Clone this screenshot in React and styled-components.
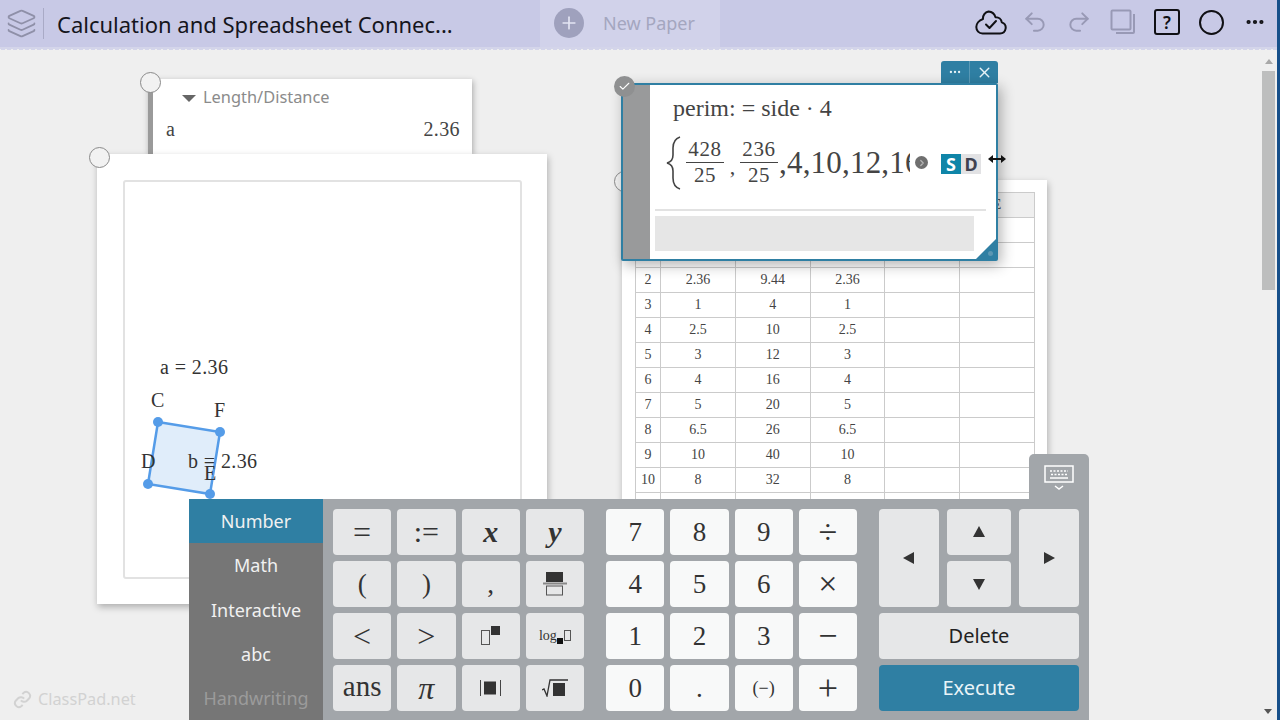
import styled, { createGlobalStyle } from 'styled-components';
import { Layers, Undo2, Redo2, Ellipsis, Plus, X, Check, ChevronRight } from 'lucide-react';

const TEAL = '#2f7fa3';
const MATH_FONT = '"Liberation Serif", "DejaVu Serif", serif';
const UI_FONT = '"Noto Sans", "Open Sans", sans-serif';

const GlobalStyle = createGlobalStyle`
  html, body { margin: 0; padding: 0; background: #efefef; }
  * { box-sizing: border-box; }
`;

const Page = styled.div`
  position: relative;
  display: flex;
  flex-direction: column;
  width: 1280px;
  height: 720px;
  overflow: hidden;
  background: #efefef;
  font-family: ${UI_FONT};
`;

const EdgeStrip = styled.div`
  position: absolute;
  top: 0;
  right: 0;
  bottom: 0;
  z-index: 10;
  width: 3px;
  background: #17508a;
`;

// Top bar with its scalloped lower edge
const TopBar = styled.header`
  position: relative;
  z-index: 5;
  display: flex;
  align-items: center;
  flex: none;
  height: 47px;
  background: #c8c9e6;
  &::after {
    content: '';
    position: absolute;
    left: 0;
    right: 0;
    top: 47px;
    height: 3px;
    background: radial-gradient(circle at 3px 0, #d4d5ea 3px, transparent 3.5px) 0 0 / 6px 3px repeat-x;
  }
`;

const TitleArea = styled.div`
  display: flex;
  align-items: center;
  width: 540px;
  height: 100%;
  padding-left: 6px;
`;

const LayersButton = styled.div`
  display: flex;
  padding-right: 6px;
  margin-right: 13px;
  border-right: 1px solid #a9aac6;
  color: #8f90a8;
`;

const Title = styled.h1`
  margin: 0;
  font-size: 22px;
  font-weight: 400;
  color: #15151c;
  white-space: nowrap;
`;

const NewPaperTab = styled.div`
  display: flex;
  align-items: center;
  gap: 19px;
  width: 180px;
  height: 47px;
  padding: 0 0 2px 14px;
  background: #d1d2ea;
  font-size: 18px;
  color: #a4a6bf;
`;

const PlusCircle = styled.span`
  display: flex;
  align-items: center;
  justify-content: center;
  width: 30px;
  height: 30px;
  border-radius: 50%;
  background: #9fa1bd;
  color: #e4e5f3;
`;

const Toolbar = styled.div`
  display: flex;
  margin: 0 0 3px auto;
  padding-right: 3px;
`;

const ToolSlot = styled.span`
  display: flex;
  align-items: center;
  justify-content: center;
  width: 44px;
  height: 44px;
  color: ${(p) => (p.$muted ? '#9899b5' : '#101014')};
`;

const HelpBox = styled.span`
  display: flex;
  align-items: center;
  justify-content: center;
  width: 26px;
  height: 26px;
  border: 2px solid #101014;
  border-radius: 3px;
  font-size: 17px;
  font-weight: 600;
`;

const ModeRing = styled.span`
  width: 25px;
  height: 25px;
  border: 2px solid #101014;
  border-radius: 50%;
`;

// Free canvas: papers and cards sit where the user dragged them
const Canvas = styled.main`
  position: relative;
  flex: 1;
`;

const Card = styled.section`
  position: absolute;
  left: ${(p) => p.$x}px;
  top: ${(p) => p.$y - 47}px;
  width: ${(p) => p.$w}px;
  height: ${(p) => p.$h}px;
  background: #fff;
  box-shadow: 1px 3px 7px rgba(0, 0, 0, 0.28);
`;

const Handle = styled.span`
  position: absolute;
  left: ${(p) => p.$x}px;
  top: ${(p) => p.$y}px;
  width: 21px;
  height: 21px;
  border: 1px solid #8a8a8a;
  border-radius: 50%;
  background: #f2f2f2;
`;

const UnitCard = styled(Card)`
  padding: 6px 12px 0 13px;
  border-left: 5px solid #9a9a9a;
  box-shadow: 1px 2px 6px rgba(0, 0, 0, 0.3);
`;

const UnitHeader = styled.div`
  display: flex;
  align-items: center;
  gap: 7px;
  height: 22px;
  padding-left: 16px;
  font-size: 16.4px;
  color: #8b8b8b;
`;

const Caret = styled.span`
  width: 0;
  height: 0;
  margin-top: 4px;
  border: 7px solid transparent;
  border-bottom: 0;
  border-top-color: #666;
`;

const UnitRow = styled.div`
  display: flex;
  justify-content: space-between;
  margin-top: 11px;
  font-family: ${MATH_FONT};
  font-size: 20px;
  letter-spacing: 0.4px;
  color: #444;
`;

const GeometryFrame = styled.div`
  width: 399px;
  height: 399px;
  margin: 26px 0 0 26px;
  border: 2px solid #e2e2e2;
  border-radius: 3px;
`;

const SheetTable = styled.table`
  margin: 12px 0 0 13px;
  width: 400px;
  border-collapse: collapse;
  table-layout: fixed;
  font-family: ${MATH_FONT};
  font-size: 14px;
  color: #444;
  td {
    height: 25px;
    padding: 0;
    border: 1px solid #cbcbcb;
    text-align: center;
  }
  td:first-child {
    width: 25px;
  }
`;

const HeaderRow = styled.tr`
  background: #efefef;
`;

// Calculation card with the focus border
const CalcCard = styled(Card)`
  display: flex;
  border: 2px solid ${TEAL};
  border-radius: 2px;
  box-shadow: 3px 4px 14px rgba(0, 0, 0, 0.3);
  z-index: 2;
`;

const CalcGutter = styled.div`
  flex: none;
  width: 27px;
  background: #999a9b;
`;

const CalcBody = styled.div`
  flex: 1;
  display: flex;
  flex-direction: column;
  padding: 6px 0 0 5px;
  font-family: ${MATH_FONT};
  color: #444;
`;

const Formula = styled.div`
  height: 34px;
  padding-left: 18px;
  font-size: 24px;
  line-height: 34px;
`;

const ResultRow = styled.div`
  position: relative;
  display: flex;
  align-items: center;
  height: 70px;
  margin-top: 3px;
  padding-left: 11px;
`;

const ResultClip = styled.div`
  display: flex;
  align-items: center;
  width: 224px;
  margin-left: 4px;
  padding: 4px 0;
  overflow: hidden;
  font-size: 31px;
  letter-spacing: 0.2px;
  white-space: nowrap;
`;

const Fraction = styled.span`
  display: inline-flex;
  flex-direction: column;
  align-items: center;
  flex: none;
  width: 38px;
  margin: -2px 1px 0 0;
  font-size: 21px;
  letter-spacing: 0.6px;
  line-height: 25px;
  span + span {
    border-top: 1px solid #444;
    align-self: stretch;
    text-align: center;
  }
`;

const Comma = styled.span`
  flex: none;
  width: 15px;
  margin-top: 8px;
  font-size: 22px;
  text-align: center;
`;

const MoreDot = styled.span`
  position: absolute;
  left: 260px;
  top: 28px;
  display: flex;
  align-items: center;
  justify-content: center;
  width: 13px;
  height: 13px;
  border-radius: 50%;
  background: #6f6f6f;
  color: #b5b5b5;
`;

const SDToggle = styled.div`
  position: absolute;
  left: 286px;
  top: 26px;
  display: flex;
  font-family: ${UI_FONT};
  font-size: 18px;
  font-weight: 700;
  line-height: 20px;
`;

const SDPart = styled.span`
  width: 20px;
  text-align: center;
  background: ${(p) => (p.$active ? '#0f85a8' : '#e2e2e4')};
  color: ${(p) => (p.$active ? '#fff' : '#3f4150')};
`;

const Divider = styled.div`
  height: 2px;
  margin: 11px 0 5px 0;
  width: 331px;
  background: #e2e2e2;
`;

const InputLine = styled.div`
  width: 319px;
  height: 35px;
  background: #e6e6e6;
`;

const ResizeCorner = styled.span`
  position: absolute;
  right: 0;
  bottom: 0;
  width: 20px;
  height: 20px;
  background: ${TEAL};
  clip-path: polygon(100% 0, 100% 100%, 0 100%);
  &::after {
    content: '';
    position: absolute;
    right: 3px;
    bottom: 3px;
    width: 5px;
    height: 5px;
    border-radius: 50%;
    background: #5c97b3;
  }
`;

const CardTab = styled.div`
  position: absolute;
  left: 941px;
  top: ${61 - 47}px;
  z-index: 2;
  display: flex;
  width: 57px;
  height: 22px;
  border-radius: 3px 3px 0 0;
  background: ${TEAL};
  color: #e8f3f7;
`;

const CardTabButton = styled.span`
  display: flex;
  align-items: center;
  justify-content: center;
  flex: 1;
  & + & {
    border-left: 1px solid #5b9ab7;
  }
`;

const CheckBadge = styled.span`
  position: absolute;
  left: 614px;
  top: ${76 - 47}px;
  z-index: 3;
  display: flex;
  align-items: center;
  justify-content: center;
  width: 21px;
  height: 21px;
  border-radius: 50%;
  background: #8f9091;
  color: #fff;
`;

const ResizeCursor = styled.svg`
  position: absolute;
  left: 987px;
  top: ${153 - 47}px;
  z-index: 4;
`;

const Watermark = styled.div`
  position: absolute;
  left: 13px;
  bottom: 10px;
  display: flex;
  align-items: center;
  gap: 6px;
  font-size: 16.3px;
  color: #d2d2d2;
`;

const ScrollTrack = styled.div`
  position: absolute;
  right: 5px;
  top: 12px;
  display: flex;
  flex-direction: column;
  align-items: center;
  gap: 7px;
  width: 13px;
`;

const ScrollUp = styled.span`
  width: 0;
  height: 0;
  border: 4px solid transparent;
  border-top: 0;
  border-bottom: 5px solid #a8a8a8;
`;

const ScrollThumb = styled.span`
  width: 13px;
  height: 219px;
  background: #bdbebe;
`;

const ScrollDown = styled.span`
  position: absolute;
  right: 8px;
  bottom: 6px;
  width: 0;
  height: 0;
  border: 4px solid transparent;
  border-bottom: 0;
  border-top: 5px solid #555;
`;

// Virtual keyboard overlay
const KeyboardToggle = styled.div`
  position: absolute;
  left: 1029px;
  bottom: 221px;
  z-index: 6;
  display: flex;
  justify-content: center;
  width: 60px;
  height: 45px;
  padding-top: 11px;
  border-radius: 5px 5px 0 0;
  background: #a2a6aa;
  color: #fff;
`;

const Keyboard = styled.div`
  position: absolute;
  left: 189px;
  bottom: 0;
  z-index: 6;
  display: flex;
  width: 900px;
  height: 221px;
  background: #a2a6aa;
`;

const KeyTabs = styled.nav`
  display: flex;
  flex-direction: column;
  flex: none;
  width: 134px;
  background: #767676;
`;

const KeyTab = styled.div`
  display: flex;
  align-items: center;
  justify-content: center;
  height: 44.5px;
  font-size: 18px;
  color: ${(p) => (p.$disabled ? '#9b9b9b' : '#f1f1f1')};
  background: ${(p) => (p.$active ? TEAL : 'transparent')};
`;

const KeyGroups = styled.div`
  display: flex;
  padding: 10px 0 0 10px;
`;

const KeyGrid = styled.div`
  display: grid;
  grid-template-columns: repeat(4, 1fr);
  grid-auto-rows: 46px;
  gap: 6px;
  width: 251px;
  margin-right: ${(p) => p.$gap}px;
`;

const Key = styled.button`
  display: flex;
  align-items: center;
  justify-content: center;
  padding: 0 0 ${(p) => p.$lift || 0}px;
  border: 0;
  border-radius: 4px;
  background: ${(p) => (p.$light ? '#f8f9f9' : '#e6e7e8')};
  color: #333;
  font-family: ${MATH_FONT};
  font-size: ${(p) => p.$size || 27}px;
  font-style: ${(p) => (p.$italic ? 'italic' : 'normal')};
  font-weight: ${(p) => (p.$bold ? 700 : 400)};
`;

const NavGrid = styled.div`
  display: grid;
  grid-template-columns: 60px 64px 60px;
  grid-auto-rows: 46px;
  column-gap: 8px;
  row-gap: 6px;
  width: 200px;
`;

const TallKey = styled(Key)`
  grid-row: span 2;
`;

const WideKey = styled(Key)`
  grid-column: 1 / -1;
  padding-bottom: 2px;
  font-family: ${UI_FONT};
  font-size: 20px;
  background: ${(p) => (p.$primary ? TEAL : '#e6e7e8')};
  color: ${(p) => (p.$primary ? '#e9f4f8' : '#222')};
`;

const NavColumn = styled.div`
  display: flex;
  flex-direction: column;
  gap: 6px;
  grid-row: span 2;
  ${Key} {
    height: 46px;
  }
`;

const LogKey = styled.span`
  display: flex;
  align-items: flex-end;
  font-size: 14px;
`;

function CloudIcon() {
  return (
    <svg width="32" height="26" viewBox="0 0 32 26" fill="none" stroke="currentColor" strokeWidth="2" strokeLinejoin="round" strokeLinecap="round">
      <path d="M7.500 24.500h17.500a5.700 5.700 0 0 0 1.800-11.100 6 6 0 0 0-6.300-5.200A8 8 0 0 0 13.500 2.500a7 7 0 0 0-5.500 7.500C3.800 11.500 1.300 15 1.300 18c0 3.800 2.700 6.500 6.200 6.500z" />
      <path d="M11 15.500l3.500 3.500 6.500-7" />
    </svg>
  );
}

function CopyIcon() {
  return (
    <svg width="26" height="26" viewBox="0 0 26 26" fill="none" stroke="currentColor" strokeWidth="2">
      <rect x="1.500" y="1.500" width="19" height="19" rx="1" />
      <path d="M24 5v18a1 1 0 0 1-1 1H6" />
    </svg>
  );
}

function KeyboardIcon() {
  return (
    <svg width="30" height="26" viewBox="0 0 30 26" fill="none" stroke="currentColor">
      <rect x="1" y="1" width="28" height="16" strokeWidth="1.500" />
      <path d="M6 6h18M7 9.500h16" strokeWidth="1.500" strokeDasharray="2 1.500" />
      <path d="M6 13h18" strokeWidth="1.500" />
      <path d="M11 21l4 3 4-3" strokeWidth="1.500" />
    </svg>
  );
}

function LinkIcon() {
  return (
    <svg width="19" height="19" viewBox="0 0 24 24" fill="none" stroke="currentColor" strokeWidth="2.500">
      <path d="M10 13a5 5 0 0 0 7.500.5l3-3a5 5 0 0 0-7-7l-1.700 1.700" />
      <path d="M14 11a5 5 0 0 0-7.500-.5l-3 3a5 5 0 0 0 7 7l1.700-1.700" />
    </svg>
  );
}

function Brace() {
  return (
    <svg width="16" height="54" viewBox="0 0 16 54" fill="none" stroke="#444" strokeWidth="1.600">
      <path d="M14 1C8 3 7 7 7 12v7c0 4-2 7-6 8 4 1 6 4 6 8v7c0 5 1 9 7 11" />
    </svg>
  );
}

// Little glyph drawings for the template keys
function FractionGlyph() {
  return (
    <svg width="24" height="24" viewBox="0 0 24 24">
      <rect x="3" y="0" width="17" height="10" fill="#333" />
      <rect x="0" y="10.500" width="24" height="2" fill="#888" />
      <rect x="3.500" y="14" width="16" height="9" fill="none" stroke="#555" />
    </svg>
  );
}

function PowerGlyph() {
  return (
    <svg width="20" height="20" viewBox="0 0 20 20">
      <rect x="0.500" y="4.500" width="8" height="14" fill="none" stroke="#555" />
      <rect x="10" y="0" width="9" height="9" fill="#333" />
    </svg>
  );
}

function AbsGlyph() {
  return (
    <svg width="21" height="16" viewBox="0 0 21 16">
      <rect x="0" y="0" width="1" height="16" fill="#444" />
      <rect x="4" y="1.500" width="12" height="13" fill="#333" />
      <rect x="20" y="0" width="1" height="16" fill="#444" />
    </svg>
  );
}

function RootGlyph() {
  return (
    <svg width="26" height="18" viewBox="0 0 26 18">
      <path d="M0 11l2-1 3 7L8 1h18" fill="none" stroke="#333" strokeWidth="1.300" />
      <rect x="11" y="4" width="12" height="13" fill="#333" />
    </svg>
  );
}

function LogGlyph() {
  return (
    <LogKey>
      log
      <svg width="14" height="16" viewBox="0 0 14 16">
        <rect x="0" y="10" width="6" height="6" fill="#111" />
        <rect x="7.500" y="2.500" width="6" height="10" fill="none" stroke="#555" />
      </svg>
    </LogKey>
  );
}

function Triangle({ dir }) {
  const points = {
    up: '1,12 7,1 13,12',
    down: '1,2 13,2 7,13',
    left: '12,1 12,13 1,7',
    right: '2,1 13,7 2,13',
  };
  return (
    <svg width="14" height="14" viewBox="0 0 14 14">
      <polygon points={points[dir]} fill="#333" />
    </svg>
  );
}

const sheetRows = [
  ['2', '2.36', '9.44', '2.36'],
  ['3', '1', '4', '1'],
  ['4', '2.5', '10', '2.5'],
  ['5', '3', '12', '3'],
  ['6', '4', '16', '4'],
  ['7', '5', '20', '5'],
  ['8', '6.5', '26', '6.5'],
  ['9', '10', '40', '10'],
  ['10', '8', '32', '8'],
  ['', '', '', ''],
];

const mathKeys = [
  { label: '=', size: 32 },
  { label: ':=', size: 30 },
  { label: 'x', italic: true, bold: true, size: 30 },
  { label: 'y', italic: true, bold: true, size: 30 },
  { label: '(' },
  { label: ')' },
  { label: ',' },
  { label: <FractionGlyph /> },
  { label: '<', size: 32 },
  { label: '>', size: 32 },
  { label: <PowerGlyph /> },
  { label: <LogGlyph /> },
  { label: 'ans', size: 29, lift: 4 },
  { label: 'π', italic: true, size: 32 },
  { label: <AbsGlyph /> },
  { label: <RootGlyph /> },
];

const numberKeys = [
  { label: '7' }, { label: '8' }, { label: '9' }, { label: '÷', size: 34 },
  { label: '4' }, { label: '5' }, { label: '6' }, { label: '×', size: 34 },
  { label: '1' }, { label: '2' }, { label: '3' }, { label: '−', size: 34 },
  { label: '0' }, { label: '.' }, { label: '(−)', size: 18 }, { label: '+', size: 36 },
];

const keyTabs = ['Number', 'Math', 'Interactive', 'abc', 'Handwriting'];

function App() {
  return (
    <Page>
      <GlobalStyle />
      <TopBar>
        <TitleArea>
          <LayersButton>
            <Layers size={31} strokeWidth={1.4} />
          </LayersButton>
          <Title>Calculation and Spreadsheet Connec...</Title>
        </TitleArea>
        <NewPaperTab>
          <PlusCircle>
            <Plus size={20} strokeWidth={2} />
          </PlusCircle>
          New Paper
        </NewPaperTab>
        <Toolbar>
          <ToolSlot><CloudIcon /></ToolSlot>
          <ToolSlot $muted><Undo2 size={26} strokeWidth={1.8} /></ToolSlot>
          <ToolSlot $muted><Redo2 size={26} strokeWidth={1.8} /></ToolSlot>
          <ToolSlot $muted><CopyIcon /></ToolSlot>
          <ToolSlot><HelpBox>?</HelpBox></ToolSlot>
          <ToolSlot><ModeRing /></ToolSlot>
          <ToolSlot><Ellipsis size={22} strokeWidth={2.6} /></ToolSlot>
        </Toolbar>
      </TopBar>

      <Canvas>
        <UnitCard $x={148} $y={79} $w={324} $h={75}>
          <UnitHeader>
            <Caret />
            Length/Distance
          </UnitHeader>
          <UnitRow>
            <span>a</span>
            <span>2.36</span>
          </UnitRow>
        </UnitCard>
        <Handle $x={140} $y={72 - 47} />

        <Card $x={97} $y={154} $w={450} $h={450}>
          <GeometryFrame>
            <svg width="395" height="395" viewBox="125 182 395 395">
              <polygon points="158,422 220,432 210,494 148,484" fill="#e0edfa" stroke="#559ce8" strokeWidth="2.500" />
              {[[158, 422], [220, 432], [210, 494], [148, 484]].map(([cx, cy]) => (
                <circle key={cx} cx={cx} cy={cy} r="5" fill="#559ce8" />
              ))}
              <g fontFamily={MATH_FONT} fontSize="20" fill="#333" letterSpacing="0.4">
                <text x="160" y="374">a = 2.36</text>
                <text x="151" y="407">C</text>
                <text x="214" y="417">F</text>
                <text x="141" y="468">D</text>
                <text x="204" y="480">E</text>
                <text x="188" y="468">b = 2.36</text>
              </g>
            </svg>
          </GeometryFrame>
        </Card>
        <Handle $x={89} $y={147 - 47} />

        <Card $x={622} $y={180} $w={425} $h={440}>
          <SheetTable>
            <tbody>
              <HeaderRow>
                <td /><td /><td /><td /><td /><td>E</td>
              </HeaderRow>
              <tr><td /><td /><td /><td /><td /><td /></tr>
              <tr><td>1</td><td /><td /><td /><td /><td /></tr>
              {sheetRows.map((row, r) => (
                <tr key={r}>
                  {row.map((cell, i) => <td key={i}>{cell}</td>)}
                  <td />
                  <td />
                </tr>
              ))}
            </tbody>
          </SheetTable>
        </Card>
        <Handle $x={614} $y={171 - 47} />

        <CardTab>
          <CardTabButton><Ellipsis size={14} /></CardTabButton>
          <CardTabButton><X size={17} strokeWidth={2} /></CardTabButton>
        </CardTab>
        <CalcCard $x={621} $y={83} $w={377} $h={178}>
          <CalcGutter />
          <CalcBody>
            <Formula>perim: = side · 4</Formula>
            <ResultRow>
              <Brace />
              <ResultClip>
                <Fraction><span>428</span><span>25</span></Fraction>
                <Comma>,</Comma>
                <Fraction><span>236</span><span>25</span></Fraction>
                ,4,10,12,16
              </ResultClip>
              <MoreDot><ChevronRight size={10} strokeWidth={3} /></MoreDot>
              <SDToggle>
                <SDPart $active>S</SDPart>
                <SDPart>D</SDPart>
              </SDToggle>
            </ResultRow>
            <Divider />
            <InputLine />
          </CalcBody>
          <ResizeCorner />
        </CalcCard>
        <CheckBadge><Check size={13} strokeWidth={2} /></CheckBadge>
        <ResizeCursor width="20" height="12" viewBox="0 0 20 12">
          <path d="M1 6l5-4v3h8V2l5 4-5 4V7H6v3z" fill="#111" />
        </ResizeCursor>

        <Watermark>
          <LinkIcon />
          ClassPad.net
        </Watermark>
        <ScrollTrack>
          <ScrollUp />
          <ScrollThumb />
        </ScrollTrack>
        <ScrollDown />
      </Canvas>

      <KeyboardToggle><KeyboardIcon /></KeyboardToggle>
      <Keyboard>
        <KeyTabs>
          {keyTabs.map((tab) => (
            <KeyTab key={tab} $active={tab === 'Number'} $disabled={tab === 'Handwriting'}>{tab}</KeyTab>
          ))}
        </KeyTabs>
        <KeyGroups>
          <KeyGrid $gap={22}>
            {mathKeys.map((key, i) => (
              <Key key={i} $italic={key.italic} $bold={key.bold} $size={key.size} $lift={key.lift}>{key.label}</Key>
            ))}
          </KeyGrid>
          <KeyGrid $gap={22}>
            {numberKeys.map((key) => (
              <Key key={key.label} $light $size={key.size}>{key.label}</Key>
            ))}
          </KeyGrid>
          <NavGrid>
            <TallKey><Triangle dir="left" /></TallKey>
            <NavColumn>
              <Key><Triangle dir="up" /></Key>
              <Key><Triangle dir="down" /></Key>
            </NavColumn>
            <TallKey><Triangle dir="right" /></TallKey>
            <WideKey>Delete</WideKey>
            <WideKey $primary>Execute</WideKey>
          </NavGrid>
        </KeyGroups>
      </Keyboard>
      <EdgeStrip />
    </Page>
  );
}

export default App;
